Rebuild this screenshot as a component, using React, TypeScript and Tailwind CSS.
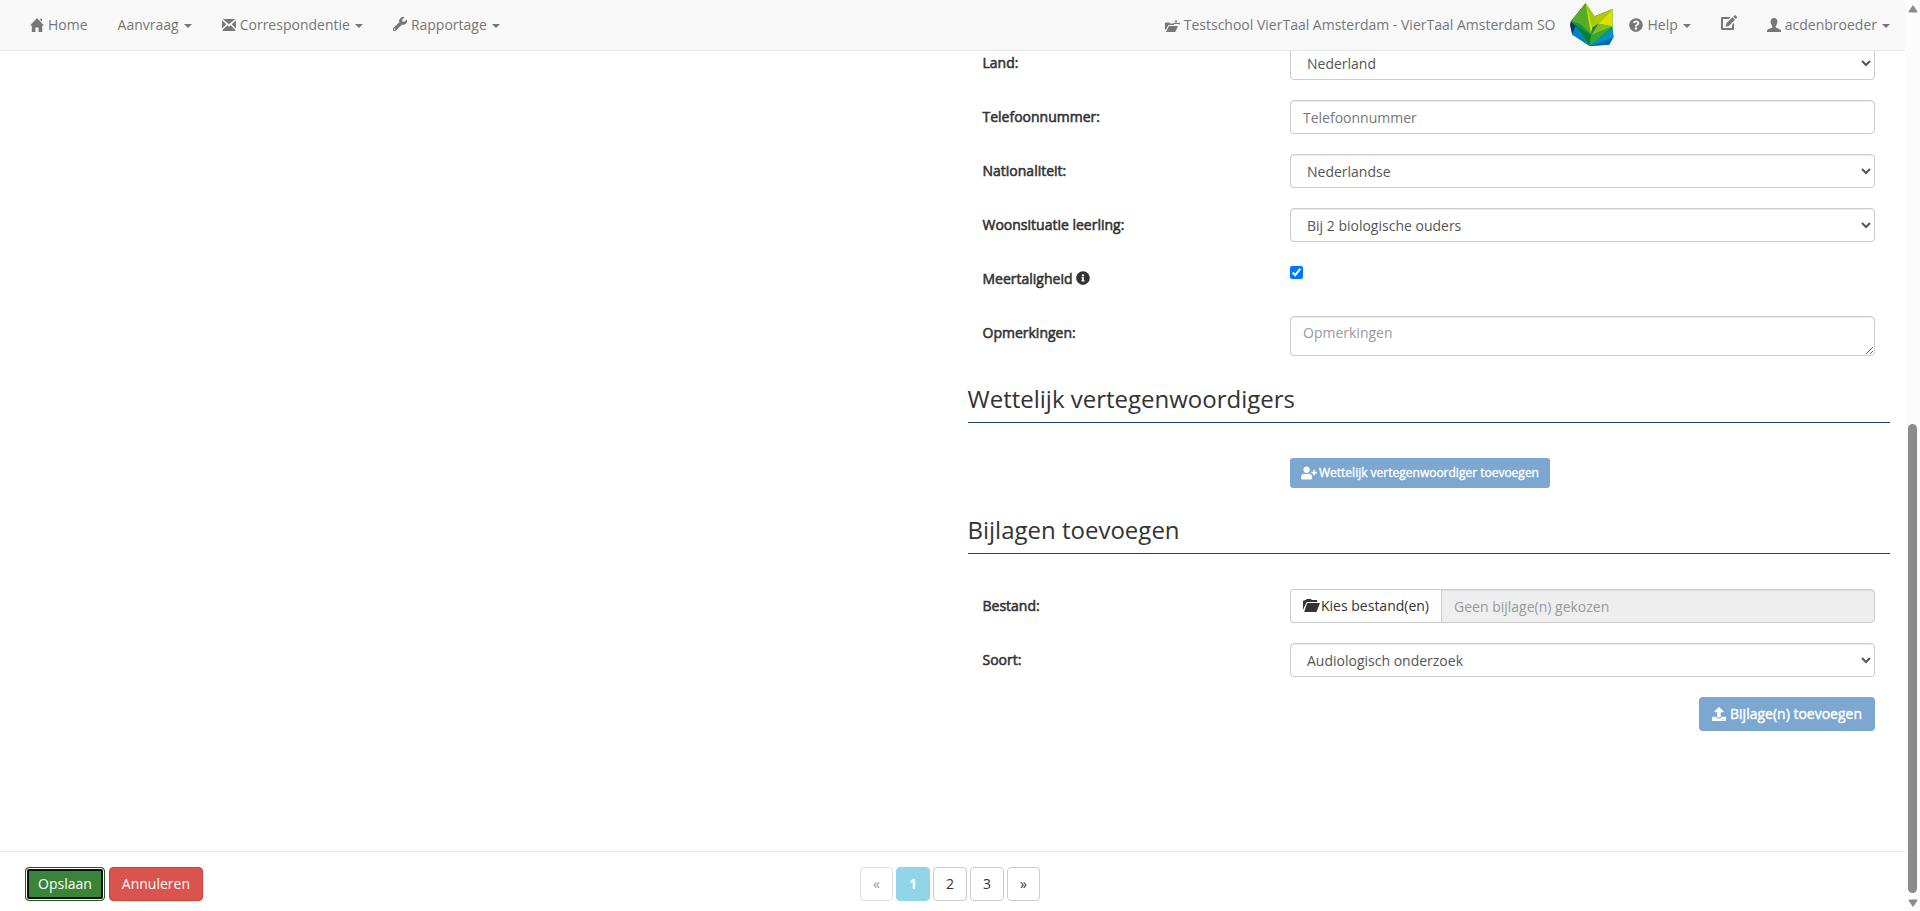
import type { ReactNode } from "react";
import { FaInfoCircle, FaQuestionCircle, FaUpload, FaUserPlus, FaWrench } from "react-icons/fa";

const inputClass =
  "block h-[34px] w-full rounded border border-[#ccc] bg-white px-3 text-sm text-[#555] shadow-[inset_0_1px_1px_rgba(0,0,0,0.075)]";

function HomeIcon() {
  return (
    <svg viewBox="0 0 14 14" className="mr-1 inline-block size-3.5 align-[-2px]" fill="currentColor">
      <path d="M7 0 14 7.4H12.2V14H8.6V9.4H5.4V14H1.8V7.4H0L7 0ZM10.2 .8h1.8v3L10.2 1.9Z" />
    </svg>
  );
}

function EnvelopeIcon() {
  return (
    <svg viewBox="0 0 14 12" className="mr-1 inline-block h-3 w-3.5 align-[-1px]" fill="currentColor">
      <path d="M.8 0H13.2L7 5.300 .8 0ZM0 1.300 4.300 5.300 0 9.600ZM14 1.300V9.600L9.700 5.300ZM5.300 6.300 7 7.700 8.700 6.300 13.400 10.900V12H.6V10.900Z" />
    </svg>
  );
}

function UserIcon() {
  return (
    <svg viewBox="0 0 14 14" className="mr-1 inline-block size-3.5 align-[-2px]" fill="currentColor">
      <path d="M7 0C4.900 0 3.600 1.500 3.600 3.600c0 1.700.6 3.500 1.700 4.500v1.200C5.100 10.400 0 10.800 0 13v1h14v-1c0-2.200-5.100-2.600-5.300-3.700V8.100c1.100-1 1.700-2.800 1.700-4.500C10.400 1.500 9.100 0 7 0Z" />
    </svg>
  );
}

function EditIcon() {
  return (
    <svg viewBox="0 0 16 15" className="inline-block h-[15px] w-4 align-[0px]" fill="currentColor">
      <path d="M1 2H9.500L7.800 4H2V13H11V10L13 8V14a1 1 0 0 1-1 1H1a1 1 0 0 1-1-1V3a1 1 0 0 1 1-1Z" />
      <path d="M11.400 2.200 14 4.800 7.900 10.900 4.600 11.700 5.400 8.300ZM12.200 1.400 13.200 .4a1 1 0 0 1 1.400 0L15.700 1.500a1 1 0 0 1 0 1.400L14.800 4Z" />
    </svg>
  );
}

function FolderOpenIcon() {
  return (
    <svg viewBox="0 0 17 13" className="mr-px inline-block h-[13px] w-[17px] align-[-1px]" fill="currentColor">
      <path d="M1 1.800 2 1H3L3.600 0H8L8.700 1H13.300a1 1 0 0 1 1 1V3H4.200a1 1 0 0 0-.9.600L0 11V1.800Z" />
      <path d="M4.900 4H17L13.700 12.400a1 1 0 0 1-.9.600H1.200L4 4.600A1 1 0 0 1 4.900 4Z" />
    </svg>
  );
}

function SchoolFolderIcon() {
  return (
    <svg viewBox="0 0 15 12" className="mr-1 inline-block h-3 w-[15px] align-[-2px]" fill="currentColor">
      <path d="M0 3.500A1 1 0 0 1 1 2.500H4L5 3.500H9V5H3.500L1 9.500H0Z" />
      <path d="M4 6H13L10.500 11.500a1 1 0 0 1-.9.500H1Z" />
      <path d="M11 0 12.500 1.500H11.600V3H14V2L15 3.500 14 5V4H8.500V3H10.400V1.500H9.500Z" />
    </svg>
  );
}

function Logo() {
  return (
    <svg viewBox="0 0 130 128" className="h-[43px] w-11" aria-label="Logo">
      <path d="M46 0 20 32 2 54 0 66 6 94 58 128 116 124 129 102 126 70V18L70 40Z" fill="#119b3d" />
      <path d="M46 0 2 54 30 62 62 92Z" fill="#58ab28" />
      <path d="M46 0 54 50 62 92 74 40Z" fill="#d3dc0a" />
      <path d="M46 0 74 42 66 72Z" fill="#9dc813" />
      <path d="M126 18 74 40 66 74 84 62Z" fill="#afca0b" />
      <path d="M126 18 84 62 126 70Z" fill="#dde103" />
      <path d="M84 62 126 70 62 96Z" fill="#86bc24" />
      <path d="M66 74 84 62 62 96Z" fill="#138b35" />
      <path d="M2 54 10 60 62 96 58 128Z" fill="#007d3c" />
      <path d="M2 54 0 66 6 94 16 70Z" fill="#153277" />
      <path d="M16 70 6 94 58 128Z" fill="#0080c8" />
      <path d="M16 70 32 88 58 128Z" fill="#00a0a5" />
      <path d="M62 96 126 70 58 128Z" fill="#35a936" />
      <path d="M126 76 129 102 58 128Z" fill="#0091d2" />
      <path d="M129 102 116 124 58 128Z" fill="#0069b4" />
    </svg>
  );
}

function Caret() {
  return (
    <span className="ml-[5px] inline-block border-x-4 border-t-4 border-x-transparent border-t-current align-middle" />
  );
}

function NavLink({ children }: { children: ReactNode }) {
  return (
    <a href="#" className="block px-[15px] py-[15px] text-[#777]">
      {children}
    </a>
  );
}

type RowProps = { label: ReactNode; htmlFor: string; children: ReactNode };

function FormRow({ label, htmlFor, children }: RowProps) {
  return (
    <div className="mb-5 grid min-h-[34px] grid-cols-3">
      <label
        htmlFor={htmlFor}
        className="px-[15px] pt-[7px] text-[#333] [-webkit-text-stroke:0.04em_currentColor]"
      >
        {label}
      </label>
      <div className="col-span-2 px-[15px]">{children}</div>
    </div>
  );
}

function SelectRow({ label, id, value }: { label: string; id: string; value: string }) {
  return (
    <FormRow label={label} htmlFor={id}>
      <select id={id} className={inputClass}>
        <option>{value}</option>
      </select>
    </FormRow>
  );
}

function SectionTitle({ children }: { children: ReactNode }) {
  return (
    <h3 className="mb-[35px] border-b border-[#1b4467] pt-2.5 pb-2.5 text-2xl leading-[26px] text-[#333]">
      {children}
    </h3>
  );
}

function PageButton({ children, className }: { children: ReactNode; className: string }) {
  return <button className={`h-[34px] rounded border px-3 ${className}`}>{children}</button>;
}

function Scrollbar() {
  return (
    <div className="flex w-[15px] shrink-0 flex-col items-center bg-[#fcfcfc] text-[#8b8b8b]">
      <svg viewBox="0 0 10 8" className="mt-[5px] h-2 w-2.5" fill="currentColor">
        <path d="M5 0 9.500 6.500Q9.500 7.500 8.500 7.500H1.500Q.5 7.500 .5 6.500Z" />
      </svg>
      <div className="flex min-h-0 flex-1 flex-col justify-end pb-1.5">
        <div className="h-[469px] w-[9px] rounded-full bg-[#8b8b8b]" />
      </div>
      <svg viewBox="0 0 10 8" className="mb-1 h-2 w-2.5" fill="currentColor">
        <path d="M5 8 9.500 1.500Q9.500 .5 8.500 .5H1.500Q.5 .5 .5 1.500Z" />
      </svg>
    </div>
  );
}

export default function App() {
  return (
    <div className="flex h-screen bg-white font-['Open_Sans',sans-serif] text-sm leading-5 text-[#333]">
      <div className="flex min-w-0 flex-1 flex-col">
        <nav className="relative z-10 flex h-[51px] shrink-0 justify-between border-b border-[#e7e7e7] bg-[#f8f8f8] pl-[15px]">
          <div className="flex">
            <NavLink>
              <HomeIcon />
              Home
            </NavLink>
            <NavLink>
              Aanvraag
              <Caret />
            </NavLink>
            <NavLink>
              <EnvelopeIcon />
              Correspondentie
              <Caret />
            </NavLink>
            <NavLink>
              <FaWrench className="mr-1 inline-block size-3.5 align-[-1px]" />
              Rapportage
              <Caret />
            </NavLink>
          </div>
          <div className="flex">
            <NavLink>
              <SchoolFolderIcon />
              Testschool VierTaal Amsterdam - VierTaal Amsterdam SO
            </NavLink>
            <div className="pt-[3px]">
              <Logo />
            </div>
            <NavLink>
              <FaQuestionCircle className="mr-1 inline-block size-3.5 align-[-2px]" />
              Help
              <Caret />
            </NavLink>
            <NavLink>
              <EditIcon />
            </NavLink>
            <NavLink>
              <UserIcon />
              acdenbroeder
              <Caret />
            </NavLink>
          </div>
        </nav>

        <main className="-mt-[5px] grid min-h-0 flex-1 grid-cols-2 overflow-hidden">
          <form className="col-start-2 px-[15px]">
            <SelectRow label="Land:" id="land" value="Nederland" />
            <FormRow label="Telefoonnummer:" htmlFor="telefoon">
              <input
                id="telefoon"
                placeholder="Telefoonnummer"
                className={`${inputClass} placeholder:text-[#777]`}
              />
            </FormRow>
            <SelectRow label="Nationaliteit:" id="nationaliteit" value="Nederlandse" />
            <SelectRow label="Woonsituatie leerling:" id="woonsituatie" value="Bij 2 biologische ouders" />
            <FormRow
              label={
                <>
                  Meertaligheid <FaInfoCircle className="inline-block size-3.5 align-[-1px]" />
                </>
              }
              htmlFor="meertaligheid"
            >
              <input id="meertaligheid" type="checkbox" defaultChecked className="mt-1 block size-[13px]" />
            </FormRow>
            <FormRow label="Opmerkingen:" htmlFor="opmerkingen">
              <textarea
                id="opmerkingen"
                placeholder="Opmerkingen"
                className="block h-10 w-full rounded border border-[#ccc] px-3 py-1.5 text-sm text-[#555] shadow-[inset_0_1px_1px_rgba(0,0,0,0.075)] placeholder:text-[#999]"
              />
            </FormRow>

            <SectionTitle>Wettelijk vertegenwoordigers</SectionTitle>
            <div className="mb-[19px] grid grid-cols-3">
              <div className="col-span-2 col-start-2 px-[15px]">
                <button
                  type="button"
                  className="flex h-[30px] items-center gap-0.5 rounded-[3px] bg-[#7ba7d0] px-[11px] text-xs text-white [-webkit-text-stroke:0.03em_currentColor]"
                >
                  <FaUserPlus className="h-3.5 w-4" />
                  Wettelijk vertegenwoordiger toevoegen
                </button>
              </div>
            </div>

            <SectionTitle>Bijlagen toevoegen</SectionTitle>
            <FormRow label="Bestand:" htmlFor="bestand">
              <div className="flex">
                <button
                  type="button"
                  className="h-[34px] shrink-0 rounded-l border border-r-0 border-[#ccc] bg-white px-3 text-[#333]"
                >
                  <FolderOpenIcon />
                  Kies bestand(en)
                </button>
                <input
                  id="bestand"
                  readOnly
                  placeholder="Geen bijlage(n) gekozen"
                  className="h-[34px] min-w-0 flex-1 rounded-r border border-[#ccc] bg-[#eee] px-3 text-sm shadow-[inset_0_1px_1px_rgba(0,0,0,0.075)] placeholder:text-[#999]"
                />
              </div>
            </FormRow>
            <SelectRow label="Soort:" id="soort" value="Audiologisch onderzoek" />
            <div className="flex justify-end px-[15px]">
              <button
                type="button"
                className="flex h-[34px] items-center gap-1 rounded bg-[#7ba7d0] px-[13px] text-white [-webkit-text-stroke:0.03em_currentColor]"
              >
                <FaUpload className="size-3.5" />
                Bijlage(n) toevoegen
              </button>
            </div>
          </form>
        </main>

        <footer className="grid h-[60px] shrink-0 grid-cols-[1fr_auto_1fr] border-t border-[#e7e7e7] bg-white pt-[15px] pr-[30px] pl-[25px]">
          <div className="flex gap-1">
            <button className="h-[34px] rounded border border-[#255625] bg-[#3a8439] px-3 text-white shadow-[inset_0_0_0_1px_#fff,inset_0_0_0_3px_#101010]">
              Opslaan
            </button>
            <button className="h-[34px] rounded border border-[#d43f3a] bg-[#d9534f] px-3 text-white">
              Annuleren
            </button>
          </div>
          <div className="flex gap-[3px]">
            <PageButton className="border-[#ddd] text-[#999]">«</PageButton>
            <PageButton className="border-[#93d5e8] bg-[#93d5e8] font-bold text-white">1</PageButton>
            <PageButton className="border-[#ccc] text-[#333]">2</PageButton>
            <PageButton className="border-[#ccc] text-[#333]">3</PageButton>
            <PageButton className="border-[#ccc] text-[#333]">»</PageButton>
          </div>
        </footer>
      </div>
      <Scrollbar />
    </div>
  );
}
